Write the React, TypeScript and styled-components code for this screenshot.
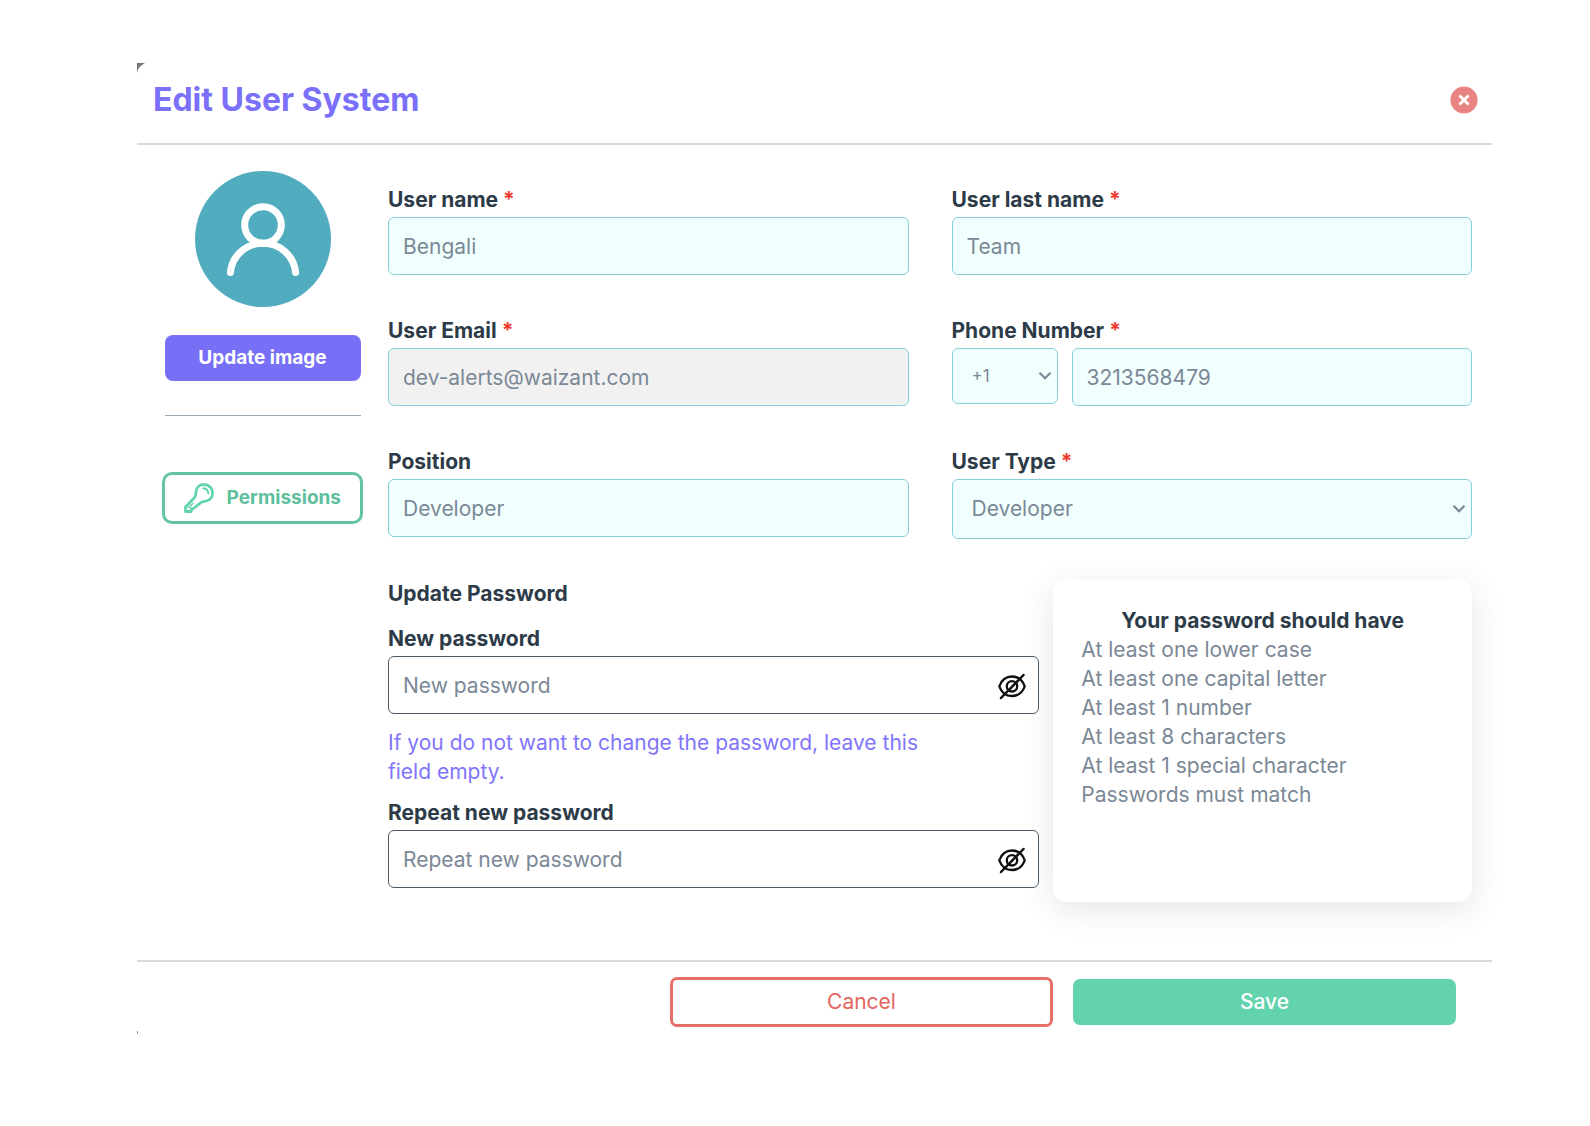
import React, { useState } from "react";
import styled, { createGlobalStyle, css } from "styled-components";

const Global = createGlobalStyle`
  *, *::before, *::after { box-sizing: border-box; }
  body { margin: 0; background: #fff; }
  body, button, input, select {
    font-family: Inter, "Noto Sans", sans-serif;
    font-size: 21px;
    line-height: 28px;
  }
`;

const Page = styled.main`
  padding: 63px 98px 93px 137px;
`;

const Dialog = styled.form`
  position: relative;
  display: flex;
  flex-direction: column;
  background: #fff;
  color: #2d3b48;

  &::before {
    content: "";
    position: absolute;
    left: 0;
    top: 0;
    width: 8px;
    height: 10px;
    background: #777;
    clip-path: polygon(0 0, 100% 0, 45% 30%, 15% 60%, 0 100%);
  }

  &::after {
    content: "";
    position: absolute;
    left: 0;
    bottom: 0;
    width: 1px;
    height: 3px;
    background: #999;
  }
`;

const Header = styled.header`
  display: flex;
  align-items: center;
  justify-content: space-between;
  height: 82px;
  padding: 0 14px 6px 16px;
  border-bottom: 2px solid #dadada;
`;

const Title = styled.h1`
  margin: 0;
  font-size: 32px;
  line-height: 40px;
  font-weight: 700;
  color: #7a70fa;
`;

const CloseButton = styled.button`
  display: flex;
  padding: 0;
  border: 0;
  background: none;
  cursor: pointer;
`;

const Body = styled.div`
  display: flex;
  align-items: flex-start;
  padding: 26px 20px 58px 25px;
`;

const Side = styled.aside`
  display: flex;
  flex-direction: column;
  align-items: center;
  flex: none;
  width: 201px;
  margin-right: 25px;
`;

const UpdateImage = styled.button`
  width: 196px;
  height: 46px;
  margin-top: 28px;
  padding: 0;
  border: 0;
  border-radius: 8px;
  background: #776ff6;
  color: #fff;
  font-size: 19px;
  font-weight: 700;
  cursor: pointer;
`;

const Divider = styled.hr`
  width: 196px;
  margin: 34px 0 56px;
  border: 0;
  border-top: 1px solid #9ba8b5;
`;

const Permissions = styled.button`
  display: flex;
  align-items: center;
  justify-content: space-between;
  width: 100%;
  height: 52px;
  padding: 0 19px;
  border: 3px solid #63c4a1;
  border-radius: 10px;
  background: #fff;
  color: #5ebf9c;
  font-size: 19px;
  font-weight: 700;
  cursor: pointer;
`;

const Fields = styled.div`
  display: flex;
  flex-direction: column;
  flex: 1;
  min-width: 0;
  padding-top: 15px;
`;

const FieldGrid = styled.div`
  display: grid;
  grid-template-columns: 1fr 1fr;
  gap: 42px 43px;
`;

const Field = styled.div`
  display: flex;
  flex-direction: column;
  min-width: 0;
`;

const labelText = css`
  display: block;
  margin: 0;
  padding-bottom: 3px;
  font-size: 21px;
  line-height: 28px;
  font-weight: 700;
`;

const Label = styled.label`
  ${labelText}
`;

const Subtitle = styled.h2`
  ${labelText}
  margin-bottom: 14px;
`;

const Star = styled.span`
  color: #f03a2e;
`;

const control = css`
  width: 100%;
  min-width: 0;
  border: 1px solid #86cfdc;
  border-radius: 6px;
  background: #f2ffff;
  color: #7b8896;
  outline-color: #86cfdc;
`;

const Input = styled.input<{ $plain?: boolean }>`
  ${control}
  height: 58px;
  padding: 0 14px;

  &:read-only { background: #f1f1f1; }

  ${(p) => p.$plain && css`
    padding-right: 56px;
    border-color: #4b5866;
    background: #fff;
  `}

  &::placeholder { color: #7b8896; opacity: 1; }
`;

const SelectBox = styled.div`
  position: relative;
  min-width: 0;

  svg {
    position: absolute;
    right: 6px;
    top: 50%;
    margin-top: -5px;
    pointer-events: none;
  }
`;

const Select = styled.select<{ $compact?: boolean }>`
  ${control}
  display: block;
  appearance: none;
  height: ${(p) => (p.$compact ? 56 : 60)}px;
  padding: 0 19px;
  font-size: ${(p) => (p.$compact ? 17 : 21)}px;
`;

const PhoneRow = styled.div`
  display: grid;
  grid-template-columns: 106px 1fr;
  align-items: start;
  gap: 14px;
`;

const PasswordRow = styled.div`
  display: grid;
  grid-template-columns: 14fr 9fr;
  gap: 14px;
  margin-top: 40px;
`;

const PasswordFields = styled.div`
  display: flex;
  flex-direction: column;
  min-width: 0;
  padding: 1px 0 14px;
`;

const PasswordBox = styled.div`
  position: relative;
`;

const EyeButton = styled.button`
  position: absolute;
  right: 13px;
  top: 16px;
  display: flex;
  padding: 0;
  border: 0;
  background: none;
  cursor: pointer;
`;

const Hint = styled.p`
  max-width: 560px;
  margin: 14px 0 13px;
  line-height: 29px;
  color: #8075fb;
`;

const Rules = styled.section`
  padding: 27px 28px;
  border-radius: 14px;
  background: #fff;
  box-shadow: 0 8px 32px rgba(40, 50, 50, 0.12);
  line-height: 29px;
`;

const RulesTitle = styled.h2`
  margin: 0;
  font-size: 21px;
  line-height: 29px;
  font-weight: 700;
  text-align: center;
`;

const RuleList = styled.ul`
  margin: 0;
  padding: 0;
  list-style: none;
  color: #7b8896;
`;

const Footer = styled.footer`
  display: flex;
  justify-content: flex-end;
  align-items: center;
  gap: 20px;
  height: 74px;
  padding: 8px 36px 0 0;
  border-top: 2px solid #dadada;
`;

const Action = styled.button<{ $filled?: boolean }>`
  width: 383px;
  height: ${(p) => (p.$filled ? 46 : 50)}px;
  padding: 0;
  border: ${(p) => (p.$filled ? "0" : "3px solid #e76f6a")};
  border-radius: 7px;
  background: ${(p) => (p.$filled ? "#63d3ae" : "#fff")};
  color: ${(p) => (p.$filled ? "#fff" : "#e4655f")};
  font-weight: ${(p) => (p.$filled ? 500 : 400)};
  cursor: pointer;
`;

const Avatar = () => (
  <svg width="136" height="136" viewBox="0 0 136 136" role="img" aria-label="User avatar">
    <circle cx="68" cy="68" r="68" fill="#50acbe" />
    <g fill="none" stroke="#fff" strokeWidth="7" strokeLinecap="round">
      <circle cx="68" cy="54" r="18.3" />
      <path d="M35.4 101.5C37 84.5 51 72.3 68 72.3S99 84.5 100.6 101.5" />
    </g>
  </svg>
);

const Chevron = () => (
  <svg width="14" height="10" viewBox="0 0 14 10" fill="none" stroke="#7b8896" strokeWidth="2.2">
    <path d="M1.5 1.8 7 7.2 12.5 1.8" />
  </svg>
);

const KeyIcon = () => (
  <svg width="30" height="30" viewBox="0 0 30 30" fill="none" stroke="#63d3ae" strokeLinejoin="round" strokeLinecap="round">
    <path strokeWidth="2.8" d="M12 8.8C12.3 4.5 15.6 1.5 20 1.5c5 0 8.6 3.7 8.6 8.5 0 4.700-3.500 8.200-8.200 8.400-2 .1-3 .6-4.200 1.800L9.500 25.500 7.600 25.700 7.200 28.500H1.500v-4.500L10.800 14.200C12 12.800 11.900 11 12 8.800z" />
    <path strokeWidth="1.5" d="M4.500 24.700 9 20.200" />
    <path strokeWidth="2" d="M19.200 5.300c2.900.3 4.900 2.300 5.200 5.200" />
  </svg>
);

const EyeOff = () => (
  <svg width="28" height="28" viewBox="0 0 28 28" fill="none" stroke="#111" strokeLinecap="round">
    <path strokeWidth="2.3" d="M1.300 14.300C3.400 8.500 8 4.500 14 4.500S24.600 8.500 26.700 14.300C24.600 20.100 20 24 14 24S3.400 20.100 1.300 14.300z" />
    <circle cx="14" cy="14.300" r="5.200" strokeWidth="2.3" />
    <path strokeWidth="2.500" d="M3 26 25.500 3" />
  </svg>
);

const Required = () => <Star aria-hidden="true">*</Star>;

const rules = [
  "At least one lower case",
  "At least one capital letter",
  "At least 1 number",
  "At least 8 characters",
  "At least 1 special character",
  "Passwords must match",
];

function PasswordField({ id, label }: { id: string; label: string }) {
  const [visible, setVisible] = useState(false);
  return (
    <Field>
      <Label htmlFor={id}>{label}</Label>
      <PasswordBox>
        <Input id={id} $plain type={visible ? "text" : "password"} placeholder={label} />
        <EyeButton type="button" aria-label="Toggle password visibility" onClick={() => setVisible(!visible)}>
          <EyeOff />
        </EyeButton>
      </PasswordBox>
    </Field>
  );
}

export default function App() {
  return (
    <Page>
      <Global />
      <Dialog onSubmit={(e) => e.preventDefault()}>
        <Header>
          <Title>Edit User System</Title>
          <CloseButton type="button" aria-label="Close">
            <svg width="28" height="28" viewBox="0 0 28 28">
              <circle cx="14" cy="14" r="13.6" fill="#e88583" />
              <path d="m9.500 9.500 9 9m0-9-9 9" stroke="#fff" strokeWidth="3" />
            </svg>
          </CloseButton>
        </Header>

        <Body>
          <Side>
            <Avatar />
            <UpdateImage type="button">Update image</UpdateImage>
            <Divider />
            <Permissions type="button">
              <KeyIcon />
              Permissions
            </Permissions>
          </Side>

          <Fields>
            <FieldGrid>
              <Field>
                <Label htmlFor="name">User name <Required /></Label>
                <Input id="name" defaultValue="Bengali" />
              </Field>
              <Field>
                <Label htmlFor="last">User last name <Required /></Label>
                <Input id="last" defaultValue="Team" />
              </Field>
              <Field>
                <Label htmlFor="email">User Email <Required /></Label>
                <Input id="email" type="email" readOnly value="dev-alerts@waizant.com" />
              </Field>
              <Field>
                <Label htmlFor="phone">Phone Number <Required /></Label>
                <PhoneRow>
                  <SelectBox>
                    <Select $compact aria-label="Country code" defaultValue="+1">
                      <option>+1</option>
                    </Select>
                    <Chevron />
                  </SelectBox>
                  <Input id="phone" type="tel" defaultValue="3213568479" />
                </PhoneRow>
              </Field>
              <Field>
                <Label htmlFor="position">Position</Label>
                <Input id="position" defaultValue="Developer" />
              </Field>
              <Field>
                <Label htmlFor="type">User Type <Required /></Label>
                <SelectBox>
                  <Select id="type" defaultValue="Developer">
                    <option>Developer</option>
                  </Select>
                  <Chevron />
                </SelectBox>
              </Field>
            </FieldGrid>

            <PasswordRow>
              <PasswordFields>
                <Subtitle>Update Password</Subtitle>
                <PasswordField id="new-password" label="New password" />
                <Hint>If you do not want to change the password, leave this field empty.</Hint>
                <PasswordField id="repeat-password" label="Repeat new password" />
              </PasswordFields>
              <Rules>
                <RulesTitle>Your password should have</RulesTitle>
                <RuleList>
                  {rules.map((rule) => (
                    <li key={rule}>{rule}</li>
                  ))}
                </RuleList>
              </Rules>
            </PasswordRow>
          </Fields>
        </Body>

        <Footer>
          <Action type="button">Cancel</Action>
          <Action type="submit" $filled>Save</Action>
        </Footer>
      </Dialog>
    </Page>
  );
}
